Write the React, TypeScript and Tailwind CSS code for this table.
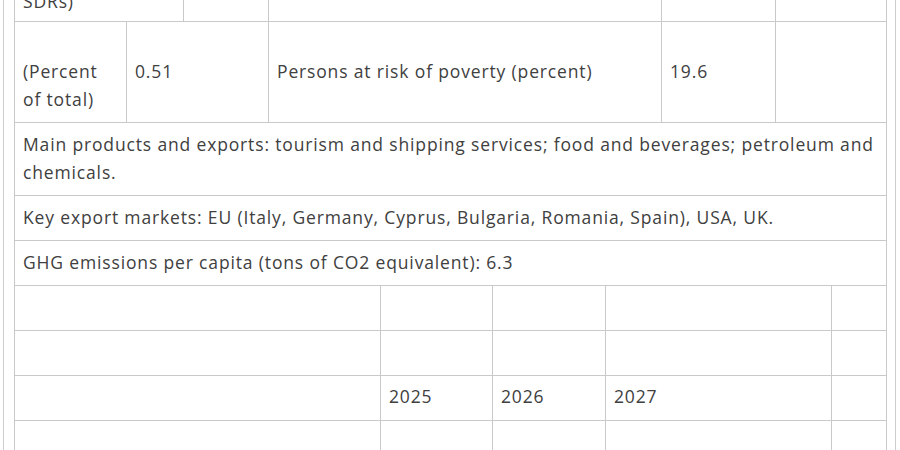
const cell = "border-r border-[#c9c9c9] px-2";

export default function App() {
  return (
    <div
      className="h-[450px] overflow-hidden bg-white text-[17.5px] leading-[28px] tracking-[0.85px] text-[#404040]"
      style={{ fontFamily: '"Open Sans", "Noto Sans", sans-serif' }}
    >
      <div className="ml-[3px] w-[893px] border-x border-[#cdcdcd] pl-[10px] pr-[8px]">
        <div className="mt-[-51px] border-x border-[#c9c9c9]">
          {/* row 1 (scrolled off) */}
          <div className="flex border-b border-[#c9c9c9]">
            <div className={`${cell} w-[169px] pt-[10px] pb-[6px]`}>
              (Billions of
              <br />
              SDRs)
            </div>
            <div className={`${cell} w-[85px]`}></div>
            <div className={`${cell} w-[393px]`}></div>
            <div className={`${cell} w-[114px]`}></div>
            <div className="flex-1"></div>
          </div>

          {/* row 2 */}
          <div className="flex border-b border-[#c9c9c9]">
            <div className={`${cell} w-[112px] pt-[35px] pb-[9px]`}>
              (Percent
              <br />
              of total)
            </div>
            <div className={`${cell} w-[142px] pt-[35px]`}>0.51</div>
            <div className={`${cell} w-[393px] pt-[35px]`}>Persons at risk of poverty (percent)</div>
            <div className={`${cell} w-[114px] pt-[35px]`}>19.6</div>
            <div className="flex-1"></div>
          </div>

          <div className="border-b border-[#c9c9c9] px-2 pt-[7px] pb-[9px]">
            Main products and exports: tourism and shipping services; food and beverages; petroleum and
            <br />
            chemicals.
          </div>
          <div className="border-b border-[#c9c9c9] px-2 pt-[7px] pb-[9px]">
            Key export markets: EU (Italy, Germany, Cyprus, Bulgaria, Romania, Spain), USA, UK.
          </div>
          <div className="border-b border-[#c9c9c9] px-2 pt-[7px] pb-[9px]">
            GHG emissions per capita (tons of CO2 equivalent): 6.3
          </div>

          {/* projections table */}
          {["", "", "years", ""].map((kind, i) => (
            <div key={i} className="flex h-[45px] border-b border-[#c9c9c9]">
              <div className={`${cell} w-[366px]`}></div>
              <div className={`${cell} w-[112px] pt-[6px]`}>{kind ? "2025" : ""}</div>
              <div className={`${cell} w-[113px] pt-[6px]`}>{kind ? "2026" : ""}</div>
              <div className={`${cell} w-[226px] pt-[6px]`}>{kind ? "2027" : ""}</div>
              <div className="flex-1"></div>
            </div>
          ))}
        </div>
      </div>
    </div>
  );
}
